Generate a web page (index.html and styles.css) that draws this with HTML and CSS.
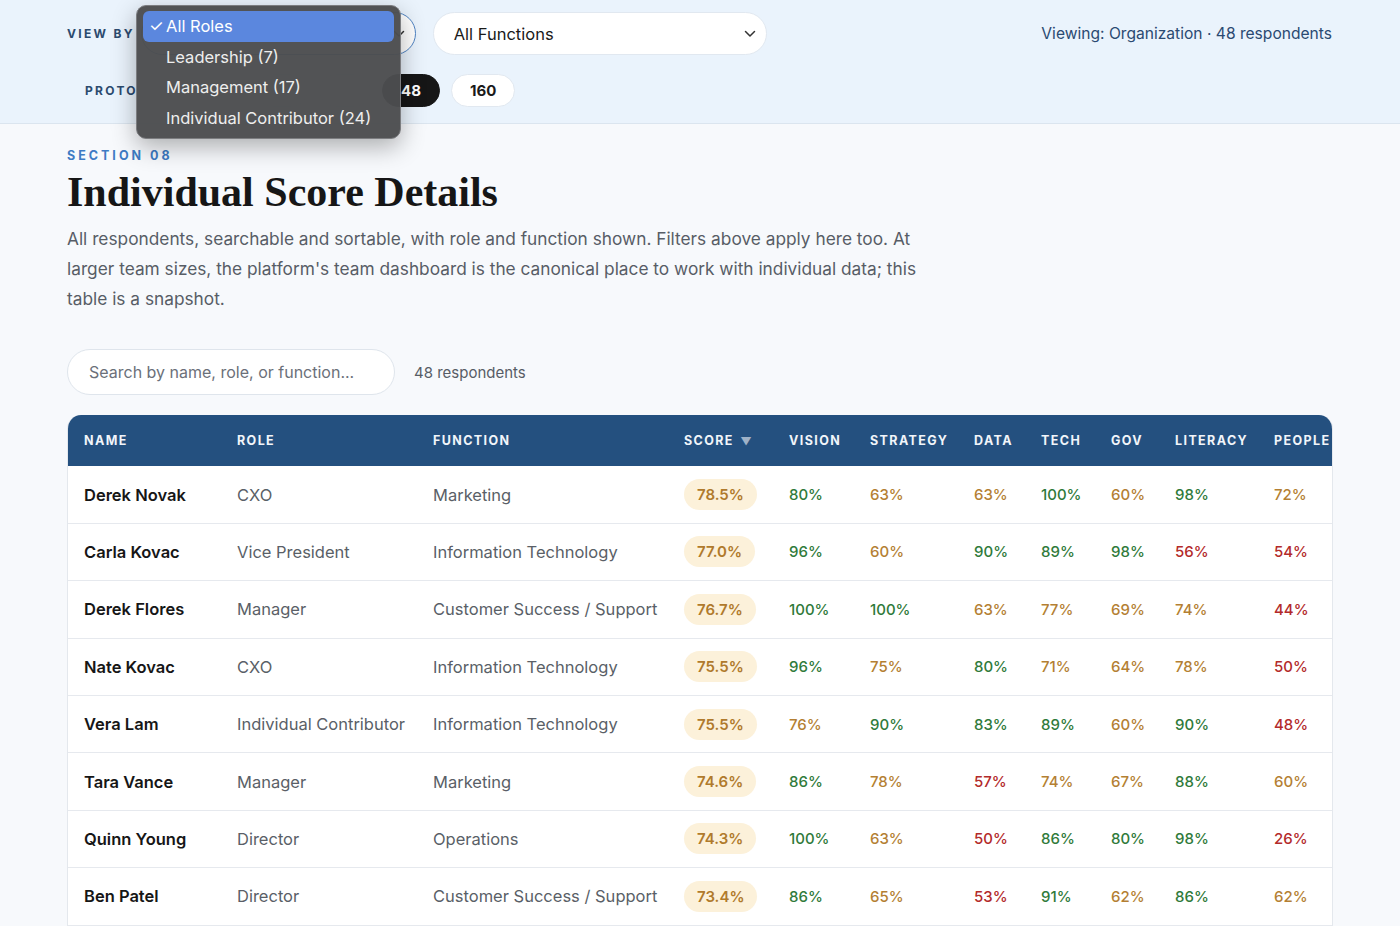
FILE: index.html
```html
<!DOCTYPE html>
<html lang="en">
<head>
  <meta charset="UTF-8">
  <meta name="viewport" content="width=device-width, initial-scale=1.0">
  <title>Individual Score Details</title>
  <link rel="stylesheet" href="styles.css">
</head>
<body>
  <div class="topbar">
    <div class="filter-row">
      <span class="label">View by</span>
      <div class="picker picker-roles focused">
        <span class="picker-value">All Roles</span>
        <svg class="chev" width="12" height="8" viewBox="0 0 12 8"><path d="M1.5 1.5 6 6l4.5-4.5" fill="none" stroke="#333" stroke-width="1.5" stroke-linecap="round" stroke-linejoin="round"/></svg>
      </div>
      <div class="picker picker-functions">
        <span>All Functions</span>
        <svg class="chev" width="12" height="8" viewBox="0 0 12 8"><path d="M1.5 1.5 6 6l4.5-4.5" fill="none" stroke="#333" stroke-width="1.5" stroke-linecap="round" stroke-linejoin="round"/></svg>
      </div>
      <span class="viewing">Viewing: Organization · 48 respondents</span>
    </div>
    <div class="size-row">
      <span class="label">Proto</span>
      <button class="pill covered"></button>
      <button class="pill covered"></button>
      <button class="pill active">48</button>
      <button class="pill">160</button>
    </div>

    <!-- open native menu of the roles select -->
    <div class="popup">
      <div class="popup-item selected"><span class="check">✓</span>All Roles</div>
      <div class="popup-item">Leadership (7)</div>
      <div class="popup-item">Management (17)</div>
      <div class="popup-item">Individual Contributor (24)</div>
    </div>
  </div>

  <div class="section">
    <div class="eyebrow">Section 08</div>
    <h1>Individual Score Details</h1>
    <p class="intro">All respondents, searchable and sortable, with role and function shown. Filters above apply here too. At larger team sizes, the platform's team dashboard is the canonical place to work with individual data; this table is a snapshot.</p>

    <div class="search-row">
      <input class="search" type="text" placeholder="Search by name, role, or function...">
      <span class="count">48 respondents</span>
    </div>

    <div class="table-wrap">
      <table>
        <colgroup>
          <col style="width:153px"><col style="width:196px"><col style="width:251px"><col style="width:105px">
          <col style="width:81px"><col style="width:104px"><col style="width:67px"><col style="width:70px">
          <col style="width:64px"><col style="width:99px"><col style="width:90px">
        </colgroup>
        <thead>
          <tr>
            <th>Name</th><th>Role</th><th>Function</th><th>Score <span class="sort">▼</span></th>
            <th>Vision</th><th>Strategy</th><th>Data</th><th>Tech</th><th>Gov</th><th>Literacy</th><th>People</th>
          </tr>
        </thead>
        <tbody id="rows"></tbody>
      </table>
    </div>
  </div>

  <script>
    const people = [
      ["Derek Novak", "CXO", "Marketing", "78.5", [80, 63, 63, 100, 60, 98, 72]],
      ["Carla Kovac", "Vice President", "Information Technology", "77.0", [96, 60, 90, 89, 98, 56, 54]],
      ["Derek Flores", "Manager", "Customer Success / Support", "76.7", [100, 100, 63, 77, 69, 74, 44]],
      ["Nate Kovac", "CXO", "Information Technology", "75.5", [96, 75, 80, 71, 64, 78, 50]],
      ["Vera Lam", "Individual Contributor", "Information Technology", "75.5", [76, 90, 83, 89, 60, 90, 48]],
      ["Tara Vance", "Manager", "Marketing", "74.6", [86, 78, 57, 74, 67, 88, 60]],
      ["Quinn Young", "Director", "Operations", "74.3", [100, 63, 50, 86, 80, 98, 26]],
      ["Ben Patel", "Director", "Customer Success / Support", "73.4", [86, 65, 53, 91, 62, 86, 62]]
    ];

    function band(v) {
      if (v >= 80) return "high";
      if (v >= 60) return "mid";
      return "low";
    }

    const out = [];
    for (const [name, role, fn, score, dims] of people) {
      out.push(`<tr><td class="name">${name}</td><td class="muted">${role}</td><td class="muted">${fn}</td>`);
      out.push(`<td><span class="score">${score}%</span></td>`);
      for (const v of dims) out.push(`<td class="val ${band(v)}">${v}%</td>`);
      out.push(`</tr>`);
    }
    document.getElementById("rows").innerHTML = out.join("");
  </script>
</body>
</html>
```

FILE: styles.css
```css
body {
  margin: 0;
  font-family: Inter, "Noto Sans", sans-serif;
  background-color: #f7f9fc;
  color: #1a1a1a;
}
.topbar {
  position: relative;
  background-color: #eaf3fc;
  border-bottom: 1px solid #dbe5ef;
  padding: 12px 68px 16px 67px;
}
.filter-row {
  display: flex;
  align-items: center;
  height: 43px;
}
.label {
  font-size: 12px;
  font-weight: 700;
  letter-spacing: 2.3px;
  text-transform: uppercase;
  color: #2b4a6e;
}
.picker {
  display: flex;
  align-items: center;
  justify-content: space-between;
  box-sizing: border-box;
  height: 43px;
  padding: 0 10px 0 20px;
  background-color: #fff;
  border: 1px solid #e1e8f0;
  border-radius: 22px;
  font-size: 16.5px;
  color: #1a1a1a;
}
.picker-roles {
  width: 275px;
  margin-left: 6px;
}
.picker-roles.focused {
  border: 1.5px solid #4f84c4;
}
.picker-roles .picker-value {
  visibility: hidden;
}
.picker-functions {
  width: 334px;
  margin-left: 17px;
}
.viewing {
  margin-left: auto;
  font-size: 15.6px;
  color: #2b4a72;
}
.size-row {
  display: flex;
  align-items: center;
  gap: 11px;
  margin-top: 19px;
  padding-left: 18px;
}
.size-row .label {
  width: 160px;
}
.pill {
  height: 33px;
  padding: 0 18px;
  background-color: #fff;
  border: 1px solid #e1e8f0;
  border-radius: 17px;
  font-family: inherit;
  font-size: 15px;
  font-weight: 700;
  color: #1a1a1a;
}
.pill.covered {
  width: 52px;
}
.pill.active {
  background-color: #161616;
  border-color: #161616;
  color: #fff;
}
.popup {
  position: absolute;
  left: 136px;
  top: 5px;
  width: 251px;
  padding: 5px 6px;
  background-color: rgba(76, 77, 80, 0.97);
  border: 1px solid #7c7d80;
  border-radius: 10px;
  box-shadow: 0 8px 24px rgba(0, 0, 0, 0.3);
}
.popup-item {
  position: relative;
  height: 30.5px;
  line-height: 30.5px;
  padding-left: 23px;
  font-size: 16.5px;
  color: #eeeeee;
  border-radius: 6px;
}
.popup-item.selected {
  background-color: #5b87de;
  color: #fff;
}
.check {
  position: absolute;
  left: 6px;
}
.section {
  padding: 24px 67px 0;
}
.eyebrow {
  font-size: 12.5px;
  font-weight: 700;
  letter-spacing: 3px;
  text-transform: uppercase;
  color: #3d7bc4;
}
h1 {
  margin: 4px 0 7px;
  font-family: "Liberation Serif", serif;
  font-size: 42px;
  font-weight: 700;
  line-height: 1.2;
  color: #161616;
}
.intro {
  max-width: 870px;
  margin: 0;
  font-size: 17.3px;
  line-height: 30px;
  color: #575d66;
}
.search-row {
  display: flex;
  align-items: center;
  gap: 19px;
  margin-top: 35px;
}
.search {
  box-sizing: border-box;
  width: 328px;
  height: 46px;
  padding: 0 21px;
  background-color: #fff;
  border: 1px solid #dfe5ec;
  border-radius: 23px;
  font-family: inherit;
  font-size: 16px;
  color: #1a1a1a;
}
.search::placeholder {
  color: #6b7079;
}
.count {
  font-size: 15px;
  color: #575d66;
}
.table-wrap {
  margin-top: 20px;
  overflow: hidden;
  border: 1px solid #e4e8ed;
  border-top: none;
  border-radius: 14px 14px 0 0;
  background-color: #fff;
}
table {
  table-layout: fixed;
  width: 1280px;
  border-collapse: collapse;
}
th {
  height: 51px;
  padding: 0 0 0 16px;
  background-color: #24507f;
  color: #f1f5fa;
  font-size: 12.5px;
  font-weight: 700;
  letter-spacing: 1.4px;
  text-align: left;
  text-transform: uppercase;
  white-space: nowrap;
}
.sort {
  margin-left: 2px;
  color: #9fb2c8;
  font-size: 11px;
}
td {
  height: 56.4px;
  padding: 0 0 0 16px;
  border-bottom: 1px solid #e6e9ee;
  font-size: 16.5px;
  white-space: nowrap;
}
.name {
  font-weight: 600;
  color: #161616;
}
.muted {
  color: #5a5f67;
}
.score {
  display: inline-block;
  padding: 6px 13px;
  background-color: #fcf1da;
  border-radius: 16px;
  color: #b07a2c;
  font-size: 15px;
  font-weight: 600;
}
.val {
  font-size: 15px;
  font-weight: 500;
}
.val.high {
  color: #2f7a3a;
}
.val.mid {
  color: #b47f33;
}
.val.low {
  color: #b32a2a;
}
```
